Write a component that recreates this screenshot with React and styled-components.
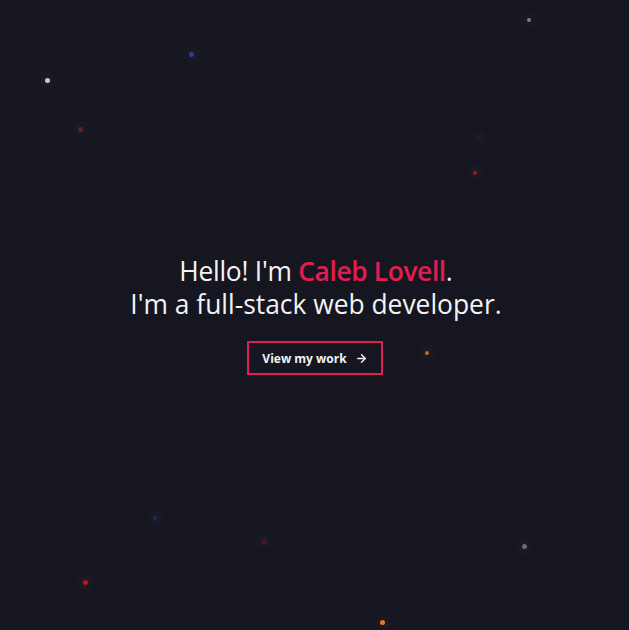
import React from "react";
import styled, { createGlobalStyle } from "styled-components";

const Global = createGlobalStyle`
  html, body { margin: 0; padding: 0; background: #15161f; }
  body { font-family: "Open Sans", "Noto Sans", sans-serif; }
`;

const Page = styled.main`
  position: relative;
  width: 100%;
  height: 630px;
  overflow: hidden;
  background: #15161f;
  display: flex;
  flex-direction: column;
  align-items: center;
  justify-content: center;
`;

const Star = styled.span`
  position: absolute;
  width: ${(p) => p.$s}px;
  height: ${(p) => p.$s}px;
  margin: -${(p) => p.$s / 2}px 0 0 -${(p) => p.$s / 2}px;
  border-radius: 50%;
  background: ${(p) => p.$c};
  box-shadow: 0 0 10px 5px rgba(255, 255, 255, 0.035);
`;

const Heading = styled.h1`
  margin: 0 0 0 3px;
  font-family: "Open Sans", sans-serif;
  font-weight: 400;
  font-size: 26.4px;
  line-height: 33px;
  color: #f3f3f5;
  text-align: center;
`;

const Lead = styled.span`
  letter-spacing: -0.25px;
`;

const Name = styled.span`
  color: #e01e50;
  font-weight: 600;
  letter-spacing: -0.4px;
`;

const Button = styled.button`
  margin: 20px 0 0 1px;
  display: flex;
  align-items: center;
  gap: 8px;
  height: 34px;
  padding: 0 13px 0 13px;
  background: transparent;
  border: 2px solid #e01e50;
  color: #f3f3f5;
  font-family: "Open Sans", sans-serif;
  font-weight: 700;
  font-size: 12px;
  cursor: pointer;
`;

const stars = [
  { x: 529, y: 20, s: 4, c: "#7b7c86" },
  { x: 191, y: 54, s: 5, c: "#2b3ca8" },
  { x: 47, y: 80, s: 5, c: "#c8c8cc" },
  { x: 80, y: 129, s: 5, c: "#5a2a25" },
  { x: 479, y: 138, s: 4, c: "#1e202b" },
  { x: 475, y: 173, s: 4, c: "#a3131c" },
  { x: 427, y: 353, s: 4, c: "#c76a1c" },
  { x: 155, y: 518, s: 4, c: "#1e2a6e" },
  { x: 264, y: 541, s: 5, c: "#4a1a22" },
  { x: 524, y: 546, s: 5, c: "#6a6b72" },
  { x: 85, y: 582, s: 5, c: "#c0101a" },
  { x: 382, y: 622, s: 5, c: "#e47b1a" },
];

export default function App() {
  return (
    <Page>
      <Global />
      {stars.map((st, i) => (
        <Star key={i} $s={st.s} $c={st.c} style={{ left: st.x, top: st.y }} />
      ))}
      <Heading>
        <Lead>Hello! I'm </Lead>
        <Name>Caleb Lovell</Name>.
        <br />
        I'm a full-stack web developer.
      </Heading>
      <Button>
        View my work
        <svg width="13" height="13" viewBox="0 0 24 24" fill="none" stroke="currentColor" strokeWidth="2.6" strokeLinecap="round" strokeLinejoin="round">
          <path d="M5 12h14" />
          <path d="M12 5l7 7-7 7" />
        </svg>
      </Button>
    </Page>
  );
}
